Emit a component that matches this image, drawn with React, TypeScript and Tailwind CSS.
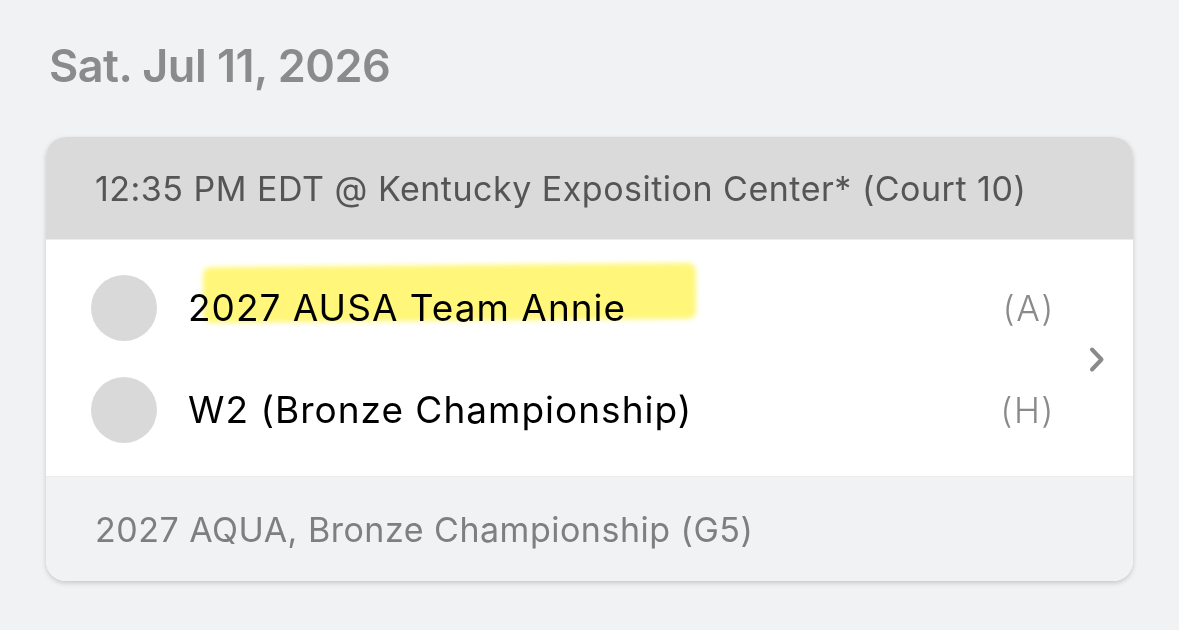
const teams = [
  { name: "2027 AUSA Team Annie", side: "(A)", marked: true },
  { name: "W2 (Bronze Championship)", side: "(H)", marked: false },
]

export default function App() {
  return (
    <div
      className="min-h-screen w-full bg-[#f1f2f4] px-[46px] pt-[38px]"
      style={{ fontFamily: "Inter, 'Noto Sans', sans-serif" }}
    >
      <h1 className="pl-[3px] text-[45px] font-semibold leading-[56px] tracking-[-0.5px] text-[#8b8b8b]">
        Sat. Jul 11, 2026
      </h1>

      <div className="mt-[43px] w-[1087px] overflow-hidden rounded-[20px] bg-white shadow-[0_2px_5px_rgba(0,0,0,0.18)]">
        <div className="flex h-[103px] items-center border-b border-[#ececec] bg-[#dadada] px-[49px]">
          <span className="text-[34px] tracking-[0.5px] text-[#555555]">
            12:35 PM EDT @ Kentucky Exposition Center* (Court 10)
          </span>
        </div>

        <div className="flex items-center bg-white pb-[33px] pt-[35px] pl-[45px] pr-[28px]">
          <div className="flex flex-1 flex-col gap-[36px]">
            {teams.map((t) => (
              <div key={t.name} className="relative flex h-[66px] items-center">
                <div className="h-[66px] w-[66px] shrink-0 rounded-full bg-[#d9d9d9]" />
                <div className="relative ml-[31px]">
                  {t.marked && (
                    <div className="absolute left-[15px] top-[-15px] h-[56px] w-[493px] -rotate-[0.5deg] rounded-[8px] bg-[#fff66c] opacity-90 blur-[2.5px]" />
                  )}
                  <span className="relative text-[37px] tracking-[1px] text-black mix-blend-multiply">
                    {t.name}
                  </span>
                </div>
                <span className="ml-auto text-[35px] font-light tracking-[1.5px] text-[#8a8a8a]">{t.side}</span>
              </div>
            ))}
          </div>
          <svg className="ml-[34px] shrink-0" width="16" height="27" viewBox="0 0 16 27" fill="none">
            <path d="M3 3.5 L12.5 13.5 L3 23.5" stroke="#8a8a8a" strokeWidth="4" strokeLinecap="round" strokeLinejoin="round" />
          </svg>
        </div>

        <div className="flex h-[105px] items-center border-t border-[#ececec] bg-[#f1f2f4] px-[49px]">
          <span className="text-[34px] tracking-[0.5px] text-[#7f7f7f]">2027 AQUA, Bronze Championship (G5)</span>
        </div>
      </div>
    </div>
  )
}
